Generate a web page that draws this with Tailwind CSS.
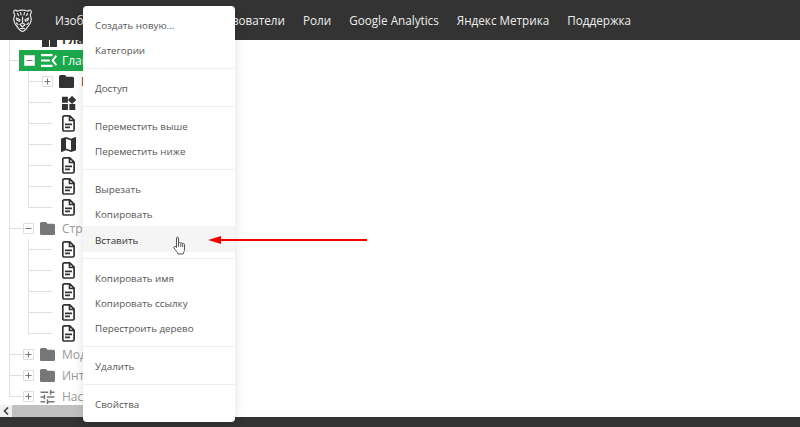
<!DOCTYPE html>
<html lang="en">
<head>
    <meta charset="UTF-8">
    <title>Дерево</title>
    <script src="https://cdn.jsdelivr.net/npm/@tailwindcss/browser@4"></script>
</head>
<body class="bg-white h-[427px] w-[800px] overflow-hidden relative font-['Open_Sans','Noto_Sans',sans-serif]">
    <svg class="hidden">
        <symbol id="i-doc" viewBox="0 0 13 17"><path fill="none" stroke="currentColor" stroke-width="1.7" d="M2.200 .9h5.600l4.300 4.300v9.400c0 .8-.6 1.400-1.400 1.400H2.200c-.8 0-1.400-.6-1.400-1.400V2.300c0-.8.6-1.400 1.400-1.400zM7.500 1v4.500h4.500"/><path fill="currentColor" d="M3 8.600h7v1.700H3zM3 11.600h5v1.700H3z"/></symbol>
        <symbol id="i-folder" viewBox="2 4 20 16" preserveAspectRatio="none"><path fill="currentColor" d="M10 4H4c-1.100 0-1.990.9-1.990 2L2 18c0 1.100.9 2 2 2h16c1.100 0 2-.9 2-2V8c0-1.100-.9-2-2-2h-8l-2-2z"/></symbol>
        <symbol id="i-plus" viewBox="0 0 11 11"><path fill="#fff" stroke="#dedede" d="M.5 .5h10v10H.5z"/><path fill="#777" d="M2.500 5h6v1h-6zM5 2.500h1v6H5z"/></symbol>
        <symbol id="i-minus" viewBox="0 0 11 11"><path fill="#fff" stroke="#dedede" d="M.5 .5h10v10H.5z"/><path fill="#777" d="M2.500 5h6v1h-6z"/></symbol>
    </svg>

    <header class="h-10 bg-[#333333] flex items-center pl-[13px] text-[11.7px] text-[#eeeeee]">
        <svg class="w-[19px] h-[23px] mr-[23px]" viewBox="0 0 19 23" fill="none" stroke="#e4e4e4" stroke-width="1.200" stroke-linejoin="round" stroke-linecap="round">
            <path d="M4 2.200C3 .4 .6 1 .7 3.200c0 1.200 1 1.800 1 3 0 1.200-1 2.300-1 4 0 3 1.800 5.500 3.300 7.300 1.600 2 3.200 4.800 5.500 4.800s3.900-2.800 5.500-4.800c1.500-1.800 3.300-4.300 3.300-7.300 0-1.700-1-2.800-1-4 0-1.200 1-1.800 1-3C18.400 1 16 .4 15 2.200c-1.700-.7-3.500-1-5.500-1s-3.800.3-5.500 1z"/>
            <path d="M7.500 3.500l.5 2.500M11.500 3.500L11 6M4.500 4.500l1 2M14.500 4.500l-1 2M3.500 9l3.500 1.800-.5 1.500L3.800 11zM15.500 9L12 10.800l.5 1.500 2.700-1.300z"/>
            <path d="M9.500 8v6M7 15.500l2.500-1.500 2.500 1.500-2.500 2.500zM3.500 14l1.500 1.500M15.500 14L14 15.500M7.500 19.500h4"/>
        </svg>
        <nav class="flex gap-[18px] pt-[2px]">
            <a>Изображения</a>
            <a>Меню</a>
            <a>Пользователи</a>
            <a>Роли</a>
            <a>Google Analytics</a>
            <a>Яндекс Метрика</a>
            <a>Поддержка</a>
        </nav>
    </header>

    <main class="h-[377px] w-[235px] flex flex-col">
        <div class="h-[365px] overflow-hidden text-[12px]">
            <div class="relative mt-[-11px]">
                <span class="absolute left-[9px] top-0 bottom-[10px] w-px bg-[#e0e0e0]"></span>

                <div class="relative h-[21px] flex items-center pl-[42px] font-bold text-[#333333]">
                    <svg class="w-[15px] h-[15px] mr-[5px]" viewBox="0 0 15 15" fill="currentColor"><path d="M0 0h7v7H0zM8 0h7v7H8zM0 8h7v7H0zM8 8h7v7H8z"/></svg>
                    <span>Главная</span>
                </div>

                <div class="relative h-[21px] flex items-center text-white">
                    <span class="absolute left-[9px] top-[10px] w-[10px] h-px bg-[#e0e0e0]"></span>
                    <div class="ml-[19px] flex-1 h-full bg-[#1ba94c] flex items-center pl-[5px]">
                        <svg class="w-[11px] h-[11px] mr-[6px]"><use href="#i-minus"/></svg>
                        <svg class="w-[16px] h-[13px] mr-[5px]" viewBox="3 6 18 12" preserveAspectRatio="none" fill="#fff"><path d="M3 18h13v-2H3v2zm0-5h10v-2H3v2zm0-7v2h13V6H3zm18 9.590L17.420 12 21 8.410 19.590 7l-5 5 5 5L21 15.590z"/></svg>
                        <span>Главная</span>
                    </div>
                </div>

                <div class="relative">
                    <span class="absolute left-[28px] top-0 bottom-[10px] w-px bg-[#e0e0e0]"></span>
                    <div class="relative h-[21px] flex items-center pl-[42px] text-[#333333]">
                        <span class="absolute left-[28px] top-[10px] w-[14px] h-px bg-[#e0e0e0]"></span>
                        <svg class="w-[11px] h-[11px] mr-[6px]"><use href="#i-plus"/></svg>
                        <svg class="w-[15px] h-[13px] mr-[7px]"><use href="#i-folder"/></svg>
                        <span>Блоки</span>
                    </div>
                    <div class="relative h-[21px] flex items-center pl-[62px] text-[#333333]">
                        <span class="absolute left-[28px] top-[10px] w-[24px] h-px bg-[#e0e0e0]"></span>
                        <svg class="w-[14px] h-[14px]" viewBox="3 2 19 19" fill="currentColor"><path d="M13 13v8h8v-8h-8zM3 21h8v-8H3v8zM3 3v8h8V3H3zm13.660-1.310L11 7.340 16.660 13l5.660-5.660-5.660-5.650z"/></svg>
                    </div>
                    <div class="relative h-[21px] flex items-center pl-[62px] text-[#333333]">
                        <span class="absolute left-[28px] top-[10px] w-[24px] h-px bg-[#e0e0e0]"></span>
                        <svg class="w-[13px] h-[17px]"><use href="#i-doc"/></svg>
                    </div>
                    <div class="relative h-[21px] flex items-center pl-[61px] text-[#333333]">
                        <span class="absolute left-[28px] top-[10px] w-[24px] h-px bg-[#e0e0e0]"></span>
                        <svg class="w-[15px] h-[15px]" viewBox="3 3 18 18" fill="currentColor"><path d="M20.500 3l-.160.030L15 5.100 9 3 3.360 4.900c-.210.070-.360.250-.360.480V20.500c0 .280.220.5.5.5l.160-.030L9 18.900l6 2.100 5.640-1.900c.210-.070.360-.250.360-.480V3.500c0-.280-.220-.5-.5-.5zM15 19l-6-2.110V5l6 2.110V19z"/></svg>
                    </div>
                    <div class="relative h-[21px] flex items-center pl-[62px] text-[#333333]">
                        <span class="absolute left-[28px] top-[10px] w-[24px] h-px bg-[#e0e0e0]"></span>
                        <svg class="w-[13px] h-[17px]"><use href="#i-doc"/></svg>
                    </div>
                    <div class="relative h-[21px] flex items-center pl-[62px] text-[#333333]">
                        <span class="absolute left-[28px] top-[10px] w-[24px] h-px bg-[#e0e0e0]"></span>
                        <svg class="w-[13px] h-[17px]"><use href="#i-doc"/></svg>
                    </div>
                    <div class="relative h-[21px] flex items-center pl-[62px] text-[#333333]">
                        <span class="absolute left-[28px] top-[10px] w-[24px] h-px bg-[#e0e0e0]"></span>
                        <svg class="w-[13px] h-[17px]"><use href="#i-doc"/></svg>
                    </div>
                </div>

                <div class="relative h-[21px] flex items-center pl-[23px] text-[#999999]">
                    <span class="absolute left-[9px] top-[10px] w-[14px] h-px bg-[#e0e0e0]"></span>
                    <svg class="w-[11px] h-[11px] mr-[6px]"><use href="#i-minus"/></svg>
                    <svg class="w-[15px] h-[13px] mr-[7px] text-[#777777]"><use href="#i-folder"/></svg>
                    <span>Страницы</span>
                </div>

                <div class="relative">
                    <span class="absolute left-[28px] top-0 bottom-[10px] w-px bg-[#e0e0e0]"></span>
                    <div class="relative h-[21px] flex items-center pl-[62px] text-[#333333]">
                        <span class="absolute left-[28px] top-[10px] w-[24px] h-px bg-[#e0e0e0]"></span>
                        <svg class="w-[13px] h-[17px]"><use href="#i-doc"/></svg>
                    </div>
                    <div class="relative h-[21px] flex items-center pl-[62px] text-[#333333]">
                        <span class="absolute left-[28px] top-[10px] w-[24px] h-px bg-[#e0e0e0]"></span>
                        <svg class="w-[13px] h-[17px]"><use href="#i-doc"/></svg>
                    </div>
                    <div class="relative h-[21px] flex items-center pl-[62px] text-[#333333]">
                        <span class="absolute left-[28px] top-[10px] w-[24px] h-px bg-[#e0e0e0]"></span>
                        <svg class="w-[13px] h-[17px]"><use href="#i-doc"/></svg>
                    </div>
                    <div class="relative h-[21px] flex items-center pl-[62px] text-[#333333]">
                        <span class="absolute left-[28px] top-[10px] w-[24px] h-px bg-[#e0e0e0]"></span>
                        <svg class="w-[13px] h-[17px]"><use href="#i-doc"/></svg>
                    </div>
                    <div class="relative h-[21px] flex items-center pl-[62px] text-[#333333]">
                        <span class="absolute left-[28px] top-[10px] w-[24px] h-px bg-[#e0e0e0]"></span>
                        <svg class="w-[13px] h-[17px]"><use href="#i-doc"/></svg>
                    </div>
                </div>

                <div class="relative h-[21px] flex items-center pl-[23px] text-[#999999]">
                    <span class="absolute left-[9px] top-[10px] w-[14px] h-px bg-[#e0e0e0]"></span>
                    <svg class="w-[11px] h-[11px] mr-[6px]"><use href="#i-plus"/></svg>
                    <svg class="w-[15px] h-[13px] mr-[7px] text-[#777777]"><use href="#i-folder"/></svg>
                    <span>Модули</span>
                </div>
                <div class="relative h-[21px] flex items-center pl-[23px] text-[#999999]">
                    <span class="absolute left-[9px] top-[10px] w-[14px] h-px bg-[#e0e0e0]"></span>
                    <svg class="w-[11px] h-[11px] mr-[6px]"><use href="#i-plus"/></svg>
                    <svg class="w-[15px] h-[13px] mr-[7px] text-[#777777]"><use href="#i-folder"/></svg>
                    <span>Интеграция</span>
                </div>
                <div class="relative h-[21px] flex items-center pl-[23px] text-[#999999]">
                    <span class="absolute left-[9px] top-[10px] w-[14px] h-px bg-[#e0e0e0]"></span>
                    <svg class="w-[11px] h-[11px] mr-[6px]"><use href="#i-plus"/></svg>
                    <svg class="w-[15px] h-[14px] mr-[7px] text-[#777777]" viewBox="3 3 18 18" fill="currentColor"><path d="M3 17v2h6v-2H3zM3 5v2h10V5H3zm10 16v-2h8v-2h-8v-2h-2v6h2zM7 9v2H3v2h4v2h2V9H7zm14 4v-2H11v2h10zm-6-4h2V7h4V5h-4V3h-2v6z"/></svg>
                    <span>Настройки</span>
                </div>
            </div>
        </div>

        <div class="h-3 flex bg-[#f1f1f1]">
            <div class="w-[12px] flex items-center justify-center">
                <svg class="w-[6px] h-[8px]" viewBox="0 0 6 8" fill="none" stroke="#444444" stroke-width="1.600"><path d="M5 .5L1.500 4 5 7.500"/></svg>
            </div>
            <div class="w-[190px] bg-[#c1c1c1]"></div>
        </div>
    </main>

    <footer class="h-[10px] bg-[#333333]"></footer>

    <!-- context menu -->
    <div class="absolute left-[83px] top-[6px] w-[152px] bg-white rounded-[4px] shadow-[0_0_12px_rgba(0,0,0,0.12)] py-[6px] text-[9.8px] text-[#555555]">
        <div class="h-[25px] flex items-center pl-[12px] pt-[4px]">Создать новую...</div>
        <div class="h-[25px] flex items-center pl-[12px] pt-[4px]">Категории</div>
        <div class="h-px my-[6px] bg-[#eeeeee]"></div>
        <div class="h-[25px] flex items-center pl-[12px] pt-[4px]">Доступ</div>
        <div class="h-px my-[6px] bg-[#eeeeee]"></div>
        <div class="h-[25px] flex items-center pl-[12px] pt-[4px]">Переместить выше</div>
        <div class="h-[25px] flex items-center pl-[12px] pt-[4px]">Переместить ниже</div>
        <div class="h-px my-[6px] bg-[#eeeeee]"></div>
        <div class="h-[25px] flex items-center pl-[12px] pt-[4px]">Вырезать</div>
        <div class="h-[25px] flex items-center pl-[12px] pt-[4px]">Копировать</div>
        <div class="h-[26px] flex items-center pl-[12px] pt-[4px] bg-[#f5f5f5] text-[#333333]">Вставить</div>
        <div class="h-px my-[6px] bg-[#eeeeee]"></div>
        <div class="h-[25px] flex items-center pl-[12px] pt-[4px]">Копировать имя</div>
        <div class="h-[25px] flex items-center pl-[12px] pt-[4px]">Копировать ссылку</div>
        <div class="h-[25px] flex items-center pl-[12px] pt-[4px]">Перестроить дерево</div>
        <div class="h-px my-[6px] bg-[#eeeeee]"></div>
        <div class="h-[25px] flex items-center pl-[12px] pt-[4px]">Удалить</div>
        <div class="h-px my-[6px] bg-[#eeeeee]"></div>
        <div class="h-[25px] flex items-center pl-[12px] pt-[4px]">Свойства</div>
    </div>

    <!-- annotation arrow -->
    <svg class="absolute left-[205px] top-[234px] w-[165px] h-[12px]" viewBox="0 0 165 12" fill="#f00000">
        <path d="M3 6l13-4v3h146v2H16v3z"/>
    </svg>

    <!-- hand cursor -->
    <svg class="absolute left-[172px] top-[236px] w-[16px] h-[20px]" viewBox="0 0 16 20" fill="#fff" stroke="#555555" stroke-width="1" stroke-linejoin="round">
        <path d="M4.500 2c0-1.300 2-1.300 2 0v6l.3-1c.6-.8 1.900-.6 2 .4.4-.8 1.800-.6 1.900.4.500-.6 1.800-.4 1.800.7v4.500c0 2.500-1 3-1.300 5H6c-.5-1.500-2-3.500-4-6-.8-1.100.7-2.300 1.700-1.300l.8 1z"/>
        <path fill="none" d="M6.500 8v3M8.800 7.500V11M10.700 8v3"/>
    </svg>
</body>
</html>
